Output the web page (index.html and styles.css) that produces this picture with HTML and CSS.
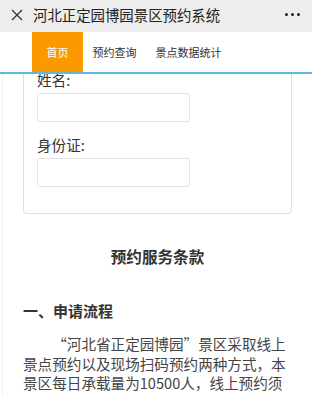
FILE: index.html
```html
<!DOCTYPE html>
<html lang="zh-CN">
  <head>
    <meta charset="utf-8">
    <title>河北正定园博园景区预约系统</title>
    <link rel="stylesheet" href="styles.css">
  </head>
  <body>
    <div class="topbar">
      <svg class="topbar__close" width="12" height="12" viewBox="0 0 12 12">
        <path d="M1 1 L11 11 M11 1 L1 11" stroke="#333" stroke-width="1.3" fill="none"/>
      </svg>
      <div class="topbar__title">河北正定园博园景区预约系统</div>
      <div class="topbar__more"><span></span><span></span><span></span></div>
    </div>
    <div class="nav">
      <a class="nav__item nav__item--active">首页</a>
      <a class="nav__item">预约查询</a>
      <a class="nav__item">景点数据统计</a>
    </div>
    <div class="main">
      <div class="page">
        <div class="form-card">
          <div class="form-card__label">姓名:</div>
          <input class="form-card__input" type="text">
          <div class="form-card__label">身份证:</div>
          <input class="form-card__input" type="text">
        </div>

        <h2 class="terms__title">预约服务条款</h2>
        <h3 class="terms__heading">一、申请流程</h3>
        <p class="terms__text">
          “河北省正定园博园”景区采取线上景点预约以及现场扫码预约两种方式，本景区每日承载量为10500人，线上预约须提前一天完成预约，预约成功后凭身份证入园。
        </p>
      </div>
    </div>
  </body>
</html>
```

FILE: styles.css
```css
html, body {
  margin: 0;
  height: 100%;
}
body {
  display: flex;
  flex-direction: column;
  font-family: "Noto Sans CJK SC", sans-serif;
  color: #333;
  background: #fff;
}

.topbar {
  display: flex;
  align-items: center;
  height: 32px;
  padding: 0 12px 3px 11px;
  box-sizing: border-box;
  background: #ededed;
  flex: none;
}
.topbar__close {
  flex: none;
}
.topbar__title {
  margin-left: 10px;
  font-size: 14.4px;
  color: #222;
  flex: 1;
}
.topbar__more {
  display: flex;
  gap: 3px;
}
.topbar__more span {
  width: 3px;
  height: 3px;
  border-radius: 50%;
  background: #222;
}

.nav {
  display: flex;
  height: 40px;
  padding-left: 32px;
  border-bottom: 2px solid #5bbcd9;
  flex: none;
}
.nav__item {
  display: flex;
  align-items: center;
  padding: 0 9.5px;
  font-size: 11px;
  color: #333;
}
.nav__item--active {
  padding: 0 14.5px;
  background: #fa9a00;
  color: #fff;
}

.main {
  flex: 1;
  overflow: hidden;
}
.page {
  margin: -20px 0 0 2px;
  padding: 0 20px;
  border-left: 1px solid #f0f0f0;
}

.form-card {
  display: flex;
  flex-direction: column;
  align-items: flex-start;
  padding: 15px 13px 26px;
  border: 1px solid #dedede;
  border-radius: 4px;
}
.form-card__label {
  font-size: 14.6px;
  line-height: 20px;
  margin-bottom: 3px;
  color: #333;
}
.form-card__input {
  width: 153px;
  height: 29px;
  box-sizing: border-box;
  border: 1px solid #e2e2e2;
  border-radius: 3px;
  margin: 0 0 13px;
  padding: 0 6px;
}
.form-card__input:last-child {
  margin-bottom: 0;
}

.terms__title {
  margin: 30px 0 0;
  font-size: 15.6px;
  line-height: 24px;
  text-align: center;
  color: #333;
}
.terms__heading {
  margin: 31px 0 0;
  font-size: 15px;
  line-height: 24px;
  color: #333;
}
.terms__text {
  margin: 11px 0 0;
  font-size: 14.6px;
  line-height: 19.7px;
  text-indent: 2em;
  color: #444;
}
```
